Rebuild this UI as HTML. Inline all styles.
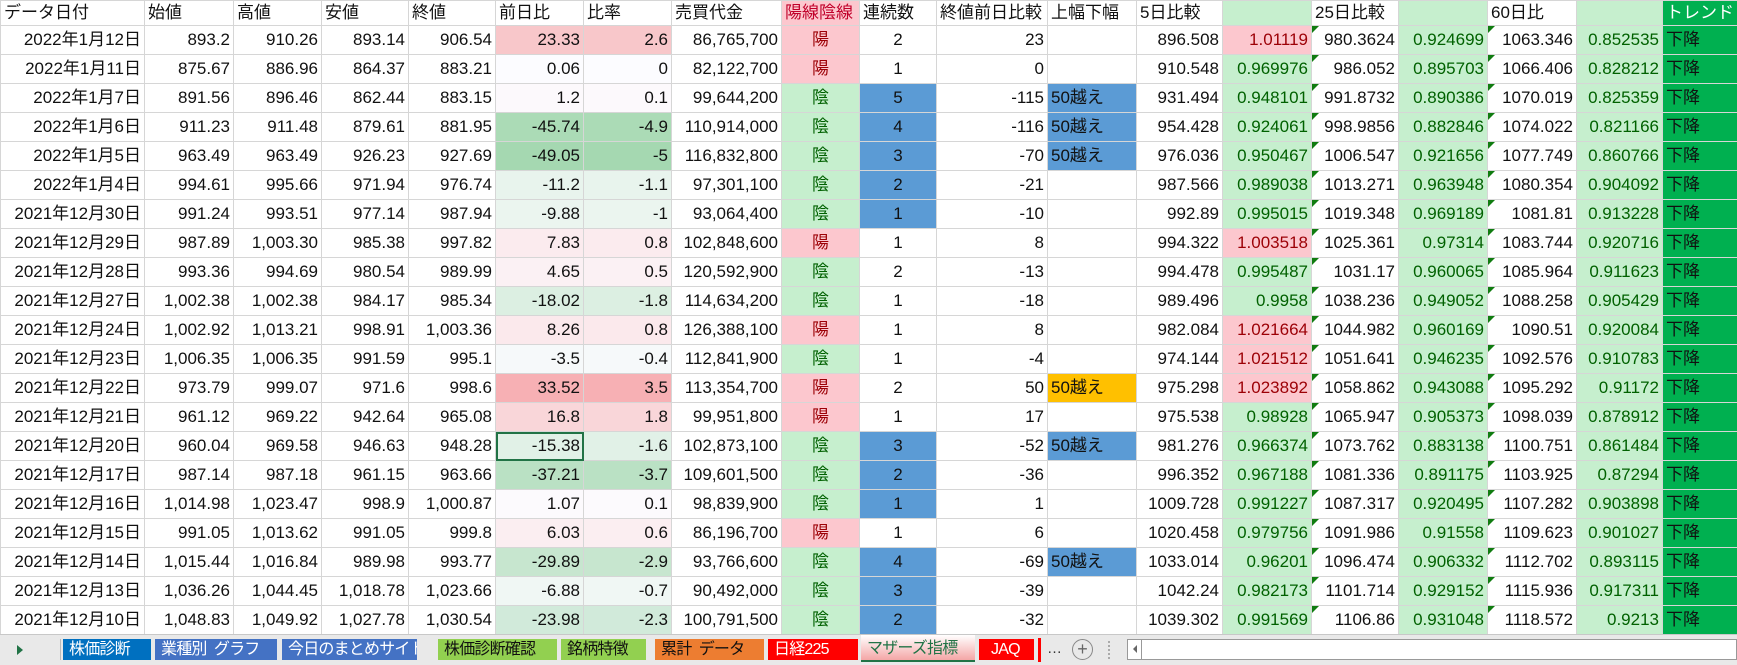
<!DOCTYPE html>
<html><head><meta charset="utf-8"><style>
html,body{margin:0;padding:0;width:1737px;height:664px;overflow:hidden;background:#fff;}
body{font-family:"Liberation Sans","Noto Sans CJK JP",sans-serif;font-size:17px;color:#111;}
table{border-collapse:collapse;table-layout:fixed;position:absolute;left:0;top:0;width:1737px;}
td{border:1px solid #d6d6d6;height:28px;padding:0 3px;text-align:right;white-space:nowrap;overflow:hidden;line-height:28px;}
tr.h td{height:24px;line-height:24px;text-align:left;}
.c{text-align:center}
.l{text-align:left}
.yo{background:#fcc7ce;color:#9c0006;text-align:center}
.in{background:#c6efce;color:#006100;text-align:center}
.gp{background:#c6efce;color:#006100}
.pp{background:#fcc7ce;color:#9c0006}
.b{background:#5b9bd5}
.o{background:#ffc000}
.tr{background:#00b050;text-align:left}
.tri{position:relative}
.tri:before{content:"";position:absolute;left:0;top:0;border-top:7px solid #107c10;border-right:7px solid transparent;}
#tabs{position:absolute;left:0;top:634px;width:1737px;height:30px;background:#e9e9e9;border-top:1px solid #c8c8c8;}
.tab{position:absolute;top:4px;height:21px;line-height:21px;font-size:16px;letter-spacing:-0.8px;padding:0 0 0 6px;box-sizing:border-box;color:#fff;white-space:nowrap;overflow:hidden;}
</style></head><body>
<table>
<colgroup><col style="width:144px"><col style="width:89px"><col style="width:88px"><col style="width:87px"><col style="width:87px"><col style="width:88px"><col style="width:88px"><col style="width:110px"><col style="width:78px"><col style="width:77px"><col style="width:111px"><col style="width:89px"><col style="width:86px"><col style="width:89px"><col style="width:87px"><col style="width:89px"><col style="width:89px"><col style="width:86px"><col style="width:75px"></colgroup>
<tr class="h"><td>データ日付</td><td>始値</td><td>高値</td><td>安値</td><td>終値</td><td>前日比</td><td>比率</td><td>売買代金</td><td style="background:#fcc7ce;color:#c0002a">陽線陰線</td><td>連続数</td><td>終値前日比較</td><td>上幅下幅</td><td>5日比較</td><td style="background:#c6efce"></td><td>25日比較</td><td style="background:#c6efce"></td><td>60日比</td><td style="background:#c6efce"></td><td style="background:#00b050;color:#fff">トレンド</td></tr>
<tr><td>2022年1月12日</td><td>893.2</td><td>910.26</td><td>893.14</td><td>906.54</td><td style="background:#f8c7ca">23.33</td><td style="background:#f8c7ca">2.6</td><td>86,765,700</td><td class="yo">陽</td><td class="c">2</td><td>23</td><td></td><td>896.508</td><td class="pp">1.01119</td><td class="tri">980.3624</td><td class="gp">0.924699</td><td class="tri">1063.346</td><td class="gp">0.852535</td><td class="tr">下降</td></tr>
<tr><td>2022年1月11日</td><td>875.67</td><td>886.96</td><td>864.37</td><td>883.21</td><td style="background:#fcfcff">0.06</td><td style="background:#fcfcff">0</td><td>82,122,700</td><td class="yo">陽</td><td class="c">1</td><td>0</td><td></td><td>910.548</td><td class="gp">0.969976</td><td class="tri">986.052</td><td class="gp">0.895703</td><td class="tri">1066.406</td><td class="gp">0.828212</td><td class="tr">下降</td></tr>
<tr><td>2022年1月7日</td><td>891.56</td><td>896.46</td><td>862.44</td><td>883.15</td><td style="background:#fcf9fc">1.2</td><td style="background:#fcf9fc">0.1</td><td>99,644,200</td><td class="in">陰</td><td class="c b">5</td><td>-115</td><td class="l b">50越え</td><td>931.494</td><td class="gp">0.948101</td><td class="tri">991.8732</td><td class="gp">0.890386</td><td class="tri">1070.019</td><td class="gp">0.825359</td><td class="tr">下降</td></tr>
<tr><td>2022年1月6日</td><td>911.23</td><td>911.48</td><td>879.61</td><td>881.95</td><td style="background:#abdbb6">-45.74</td><td style="background:#abdbb6">-4.9</td><td>110,914,000</td><td class="in">陰</td><td class="c b">4</td><td>-116</td><td class="l b">50越え</td><td>954.428</td><td class="gp">0.924061</td><td class="tri">998.9856</td><td class="gp">0.882846</td><td class="tri">1074.022</td><td class="gp">0.821166</td><td class="tr">下降</td></tr>
<tr><td>2022年1月5日</td><td>963.49</td><td>963.49</td><td>926.23</td><td>927.69</td><td style="background:#a5d8b1">-49.05</td><td style="background:#a5d8b1">-5</td><td>116,832,800</td><td class="in">陰</td><td class="c b">3</td><td>-70</td><td class="l b">50越え</td><td>976.036</td><td class="gp">0.950467</td><td class="tri">1006.547</td><td class="gp">0.921656</td><td class="tri">1077.749</td><td class="gp">0.860766</td><td class="tr">下降</td></tr>
<tr><td>2022年1月4日</td><td>994.61</td><td>995.66</td><td>971.94</td><td>976.74</td><td style="background:#e8f4ed">-11.2</td><td style="background:#e8f4ed">-1.1</td><td>97,301,100</td><td class="in">陰</td><td class="c b">2</td><td>-21</td><td></td><td>987.566</td><td class="gp">0.989038</td><td class="tri">1013.271</td><td class="gp">0.963948</td><td class="tri">1080.354</td><td class="gp">0.904092</td><td class="tr">下降</td></tr>
<tr><td>2021年12月30日</td><td>991.24</td><td>993.51</td><td>977.14</td><td>987.94</td><td style="background:#ebf5ef">-9.88</td><td style="background:#ebf5ef">-1</td><td>93,064,400</td><td class="in">陰</td><td class="c b">1</td><td>-10</td><td></td><td>992.89</td><td class="gp">0.995015</td><td class="tri">1019.348</td><td class="gp">0.969189</td><td class="tri">1081.81</td><td class="gp">0.913228</td><td class="tr">下降</td></tr>
<tr><td>2021年12月29日</td><td>987.89</td><td>1,003.30</td><td>985.38</td><td>997.82</td><td style="background:#fbebee">7.83</td><td style="background:#fbebee">0.8</td><td>102,848,600</td><td class="yo">陽</td><td class="c">1</td><td>8</td><td></td><td>994.322</td><td class="pp">1.003518</td><td class="tri">1025.361</td><td class="gp">0.97314</td><td class="tri">1083.744</td><td class="gp">0.920716</td><td class="tr">下降</td></tr>
<tr><td>2021年12月28日</td><td>993.36</td><td>994.69</td><td>980.54</td><td>989.99</td><td style="background:#fbf1f4">4.65</td><td style="background:#fbf1f4">0.5</td><td>120,592,900</td><td class="in">陰</td><td class="c">2</td><td>-13</td><td></td><td>994.478</td><td class="gp">0.995487</td><td class="tri">1031.17</td><td class="gp">0.960065</td><td class="tri">1085.964</td><td class="gp">0.911623</td><td class="tr">下降</td></tr>
<tr><td>2021年12月27日</td><td>1,002.38</td><td>1,002.38</td><td>984.17</td><td>985.34</td><td style="background:#dcefe2">-18.02</td><td style="background:#dcefe2">-1.8</td><td>114,634,200</td><td class="in">陰</td><td class="c">1</td><td>-18</td><td></td><td>989.496</td><td class="gp">0.9958</td><td class="tri">1038.236</td><td class="gp">0.949052</td><td class="tri">1088.258</td><td class="gp">0.905429</td><td class="tr">下降</td></tr>
<tr><td>2021年12月24日</td><td>1,002.92</td><td>1,013.21</td><td>998.91</td><td>1,003.36</td><td style="background:#fbe9ec">8.26</td><td style="background:#fbe9ec">0.8</td><td>126,388,100</td><td class="yo">陽</td><td class="c">1</td><td>8</td><td></td><td>982.084</td><td class="pp">1.021664</td><td class="tri">1044.982</td><td class="gp">0.960169</td><td class="tri">1090.51</td><td class="gp">0.920084</td><td class="tr">下降</td></tr>
<tr><td>2021年12月23日</td><td>1,006.35</td><td>1,006.35</td><td>991.59</td><td>995.1</td><td style="background:#f6f9fa">-3.5</td><td style="background:#f6f9fa">-0.4</td><td>112,841,900</td><td class="in">陰</td><td class="c">1</td><td>-4</td><td></td><td>974.144</td><td class="pp">1.021512</td><td class="tri">1051.641</td><td class="gp">0.946235</td><td class="tri">1092.576</td><td class="gp">0.910783</td><td class="tr">下降</td></tr>
<tr><td>2021年12月22日</td><td>973.79</td><td>999.07</td><td>971.6</td><td>998.6</td><td style="background:#f7b0b4">33.52</td><td style="background:#f7b0b4">3.5</td><td>113,354,700</td><td class="yo">陽</td><td class="c">2</td><td>50</td><td class="l o">50越え</td><td>975.298</td><td class="pp">1.023892</td><td class="tri">1058.862</td><td class="gp">0.943088</td><td class="tri">1095.292</td><td class="gp">0.91172</td><td class="tr">下降</td></tr>
<tr><td>2021年12月21日</td><td>961.12</td><td>969.22</td><td>942.64</td><td>965.08</td><td style="background:#f9d6d9">16.8</td><td style="background:#f9d6d9">1.8</td><td>99,951,800</td><td class="yo">陽</td><td class="c">1</td><td>17</td><td></td><td>975.538</td><td class="gp">0.98928</td><td class="tri">1065.947</td><td class="gp">0.905373</td><td class="tri">1098.039</td><td class="gp">0.878912</td><td class="tr">下降</td></tr>
<tr><td>2021年12月20日</td><td>960.04</td><td>969.58</td><td>946.63</td><td>948.28</td><td style="background:#e1f1e7;outline:2px solid #217346;outline-offset:-2px">-15.38</td><td style="background:#e1f1e7">-1.6</td><td>102,873,100</td><td class="in">陰</td><td class="c b">3</td><td>-52</td><td class="l b">50越え</td><td>981.276</td><td class="gp">0.966374</td><td class="tri">1073.762</td><td class="gp">0.883138</td><td class="tri">1100.751</td><td class="gp">0.861484</td><td class="tr">下降</td></tr>
<tr><td>2021年12月17日</td><td>987.14</td><td>987.18</td><td>961.15</td><td>963.66</td><td style="background:#bae1c4">-37.21</td><td style="background:#bae1c4">-3.7</td><td>109,601,500</td><td class="in">陰</td><td class="c b">2</td><td>-36</td><td></td><td>996.352</td><td class="gp">0.967188</td><td class="tri">1081.336</td><td class="gp">0.891175</td><td class="tri">1103.925</td><td class="gp">0.87294</td><td class="tr">下降</td></tr>
<tr><td>2021年12月16日</td><td>1,014.98</td><td>1,023.47</td><td>998.9</td><td>1,000.87</td><td style="background:#fcfafd">1.07</td><td style="background:#fcfafd">0.1</td><td>98,839,900</td><td class="in">陰</td><td class="c b">1</td><td>1</td><td></td><td>1009.728</td><td class="gp">0.991227</td><td class="tri">1087.317</td><td class="gp">0.920495</td><td class="tri">1107.282</td><td class="gp">0.903898</td><td class="tr">下降</td></tr>
<tr><td>2021年12月15日</td><td>991.05</td><td>1,013.62</td><td>991.05</td><td>999.8</td><td style="background:#fbeef1">6.03</td><td style="background:#fbeef1">0.6</td><td>86,196,700</td><td class="yo">陽</td><td class="c">1</td><td>6</td><td></td><td>1020.458</td><td class="gp">0.979756</td><td class="tri">1091.986</td><td class="gp">0.91558</td><td class="tri">1109.623</td><td class="gp">0.901027</td><td class="tr">下降</td></tr>
<tr><td>2021年12月14日</td><td>1,015.44</td><td>1,016.84</td><td>989.98</td><td>993.77</td><td style="background:#c7e6cf">-29.89</td><td style="background:#c7e6cf">-2.9</td><td>93,766,600</td><td class="in">陰</td><td class="c b">4</td><td>-69</td><td class="l b">50越え</td><td>1033.014</td><td class="gp">0.96201</td><td class="tri">1096.474</td><td class="gp">0.906332</td><td class="tri">1112.702</td><td class="gp">0.893115</td><td class="tr">下降</td></tr>
<tr><td>2021年12月13日</td><td>1,036.26</td><td>1,044.45</td><td>1,018.78</td><td>1,023.66</td><td style="background:#f0f7f4">-6.88</td><td style="background:#f0f7f4">-0.7</td><td>90,492,000</td><td class="in">陰</td><td class="c b">3</td><td>-39</td><td></td><td>1042.24</td><td class="gp">0.982173</td><td class="tri">1101.714</td><td class="gp">0.929152</td><td class="tri">1115.936</td><td class="gp">0.917311</td><td class="tr">下降</td></tr>
<tr><td>2021年12月10日</td><td>1,048.83</td><td>1,049.92</td><td>1,027.78</td><td>1,030.54</td><td style="background:#d1eada">-23.98</td><td style="background:#d1eada">-2.3</td><td>100,791,500</td><td class="in">陰</td><td class="c b">2</td><td>-32</td><td></td><td>1039.302</td><td class="gp">0.991569</td><td class="tri">1106.86</td><td class="gp">0.931048</td><td class="tri">1118.572</td><td class="gp">0.9213</td><td class="tr">下降</td></tr>
</table>
<div id="tabs">
<div style="position:absolute;left:17px;top:10px;border-left:6px solid #217346;border-top:5px solid transparent;border-bottom:5px solid transparent;"></div>
<div style="position:absolute;left:60px;top:4px;width:1px;height:21px;background:#bbb"></div>
<div class="tab" style="left:63px;width:88px;background:#0070c0">株価診断</div>
<div class="tab" style="left:155px;width:122px;background:#4472c4">業種別&nbsp; グラフ</div>
<div class="tab" style="left:282px;width:135px;background:#4472c4">今日のまとめサイト</div>
<div class="tab" style="left:438px;width:119px;background:#92d050;color:#111">株価診断確認</div>
<div class="tab" style="left:561px;width:85px;background:#92d050;color:#111">銘柄特徴</div>
<div class="tab" style="left:655px;width:109px;background:#ed7d31;color:#111">累計&nbsp; データ</div>
<div class="tab" style="left:768px;width:90px;background:#ff0000">日経225</div>
<div class="tab" style="left:861px;width:114px;top:0;height:27px;line-height:27px;background:linear-gradient(#fff,#f4a6a6);color:#217346;border-bottom:2px solid #217346">マザーズ指標</div>
<div class="tab" style="left:979px;width:55px;background:#ff0000;padding-left:12px">JAQ</div>
<div style="position:absolute;left:1038px;top:3px;width:3px;height:24px;background:#ff0000"></div>
<div style="position:absolute;left:1047px;top:5px;font-size:15px;color:#333">…</div>
<div style="position:absolute;left:1072px;top:4px;width:19px;height:19px;border:1.5px solid #888;border-radius:50%;text-align:center;line-height:19px;font-size:18px;color:#666">+</div>
<div style="position:absolute;left:1108px;top:6px;width:2px;height:18px;border-left:2px dotted #aaa"></div>
<div style="position:absolute;left:1127px;top:4px;width:610px;height:21px;background:#fff;border:1px solid #999;box-sizing:border-box"></div>
<div style="position:absolute;left:1133px;top:10px;border-right:4px solid #666;border-top:4px solid transparent;border-bottom:4px solid transparent;"></div>
<div style="position:absolute;left:1141px;top:5px;width:1px;height:19px;background:#999"></div>
</div>
</body></html>
